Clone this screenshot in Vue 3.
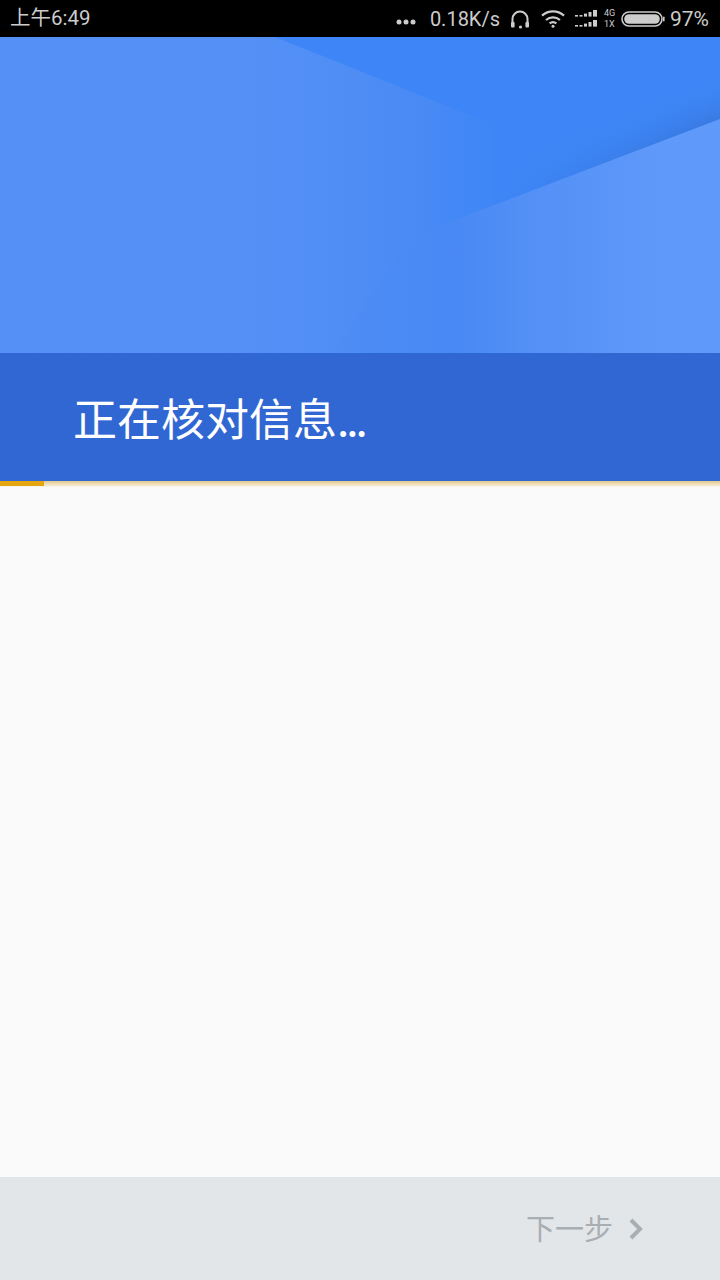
<script setup>
const title = '正在核对信息'
</script>

<template>
  <div class="screen">
    <header class="status">
      <span class="time">上午6:49</span>
      <div class="status-right">
        <svg class="dots" width="20" height="6" viewBox="0 0 20 6"><circle cx="3" cy="3" r="2.5" /><circle cx="10" cy="3" r="2.5" /><circle cx="17" cy="3" r="2.5" /></svg>
        <span class="speed">0.18K/s</span>
        <svg class="ic-head" width="20" height="20" viewBox="0 0 20 20" fill="none"><path d="M2.5 17V10a7.5 7.5 0 0 1 15 0v7" stroke="#ccc" stroke-width="2" /><rect x="1" y="13" width="3.6" height="5.5" rx="1" fill="#ccc" /><rect x="15.4" y="13" width="3.6" height="5.5" rx="1" fill="#ccc" /><circle cx="10.5" cy="18" r="1.6" fill="#ccc" /></svg>
        <svg class="ic-wifi" width="24" height="18" viewBox="0 0 24 18" fill="none" stroke="#ccc" stroke-width="2.2"><path d="M1 5.600C7.500 0 16.500 0 23 5.600" /><path d="M5 10c4.200-3.600 9.800-3.600 14 0" /><path d="M8.600 13.400c2-1.600 4.800-1.600 6.800 0" /><circle cx="12" cy="16.200" r="1.500" fill="#ccc" stroke="none" /></svg>
        <svg class="ic-sig" width="24" height="18" viewBox="0 0 24 18" fill="#ccc"><rect x="0" y="5" width="3" height="1.600" /><rect x="4.500" y="5" width="3" height="1.600" /><rect x="9" y="3.600" width="3" height="3" /><rect x="13.500" y="2" width="3" height="4.600" /><rect x="18" y="0" width="4" height="6.600" /><rect x="0" y="15" width="3" height="1.600" /><rect x="4.500" y="15" width="3" height="1.600" /><rect x="9" y="13.600" width="3" height="3" /><rect x="13.500" y="12" width="3" height="4.600" /><rect x="18" y="10" width="4" height="6.600" /></svg>
        <span class="net"><span>4G</span><span>1X</span></span>
        <svg class="ic-batt" width="44" height="16" viewBox="0 0 44 16" fill="none"><rect x="1" y="1" width="40" height="14" rx="7" stroke="#ccc" stroke-width="1.600" /><rect x="3.200" y="3.200" width="35.600" height="9.600" rx="4.800" fill="#ccc" /><rect x="42" y="5.500" width="1.600" height="5" rx=".8" fill="#ccc" /></svg>
        <span class="pct">97%</span>
      </div>
    </header>

    <section class="hero">
      <svg class="hero-art" width="720" height="316" viewBox="0 0 720 316" aria-hidden="true">
        <defs>
          <linearGradient id="base" gradientUnits="userSpaceOnUse" x1="0" y1="0" x2="720" y2="0">
            <stop offset="0" stop-color="#5490f6" />
            <stop offset=".33" stop-color="#5490f6" />
            <stop offset=".5" stop-color="#4f8df5" />
            <stop offset=".575" stop-color="#4a8af4" />
            <stop offset=".69" stop-color="#3e86f7" />
            <stop offset="1" stop-color="#3e86f7" />
          </linearGradient>
          <linearGradient id="right" gradientUnits="userSpaceOnUse" x1="330" y1="0" x2="660" y2="0">
            <stop offset="0" stop-color="#4a8af4" stop-opacity="0" />
            <stop offset=".27" stop-color="#4a8af4" />
            <stop offset=".36" stop-color="#4888f4" />
            <stop offset=".6" stop-color="#5390f6" />
            <stop offset="1" stop-color="#5f99f9" />
          </linearGradient>
          <linearGradient id="shade" gradientUnits="userSpaceOnUse" x1="600" y1="128" x2="585" y2="88">
            <stop offset="0" stop-color="#3876da" stop-opacity=".75" />
            <stop offset="1" stop-color="#3e86f7" stop-opacity="0" />
          </linearGradient>
          <linearGradient id="shadeFade" gradientUnits="userSpaceOnUse" x1="500" y1="0" x2="700" y2="0">
            <stop offset="0" stop-color="#000" />
            <stop offset="1" stop-color="#fff" />
          </linearGradient>
          <mask id="shadeMask" maskUnits="userSpaceOnUse" x="0" y="0" width="720" height="316">
            <rect width="720" height="316" fill="url(#shadeFade)" />
          </mask>
        </defs>
        <rect width="720" height="316" fill="url(#base)" />
        <polygon points="275,0 720,0 720,82 497,167 497,89" fill="#3e86f7" />
        <polygon points="720,20 720,82 497,167 497,100" fill="url(#shade)" mask="url(#shadeMask)" />
        <polygon points="720,82 413,199 330,316 720,316" fill="url(#right)" />
      </svg>
    </section>

    <section class="band">
      <svg class="grain" width="720" height="128" aria-hidden="true">
        <filter id="grainF"><feTurbulence type="fractalNoise" baseFrequency=".9" numOctaves="2" /><feColorMatrix type="saturate" values="0" /></filter>
        <rect width="720" height="128" filter="url(#grainF)" />
      </svg>
      <h1 class="title">{{ title }}<span class="ell">...</span></h1>
    </section>

    <div class="progress"><div class="progress-fill"></div></div>

    <main class="body"></main>

    <footer class="foot">
      <span class="next">下一步</span>
      <svg class="chev" width="16" height="24" viewBox="0 0 16 24" fill="none"><path d="M3 3l9 9-9 9" stroke="#a9aeb2" stroke-width="4" /></svg>
    </footer>
  </div>
</template>

<style scoped>
.screen {
  width: 720px;
  height: 1280px;
  display: flex;
  flex-direction: column;
  overflow: hidden;
  background: #fafafa;
  font-family: "Noto Sans CJK SC", "Noto Sans", sans-serif;
}
.status {
  height: 37px;
  flex: none;
  background: #000;
  color: #ccc;
  display: flex;
  align-items: center;
  justify-content: space-between;
  padding: 0 11px;
  font-family: Roboto, "Noto Sans CJK SC", sans-serif;
  font-size: 20px;
}
.time { font-size: 20.500px; line-height: 37px; margin-left: -1px; }
.status-right { display: flex; align-items: center; }
.dots { fill: #ccc; margin: 6px 14px 0 0; }
.speed { margin-right: 10px; }
.ic-head { margin-right: 11px; }
.ic-wifi { margin-right: 10px; }
.ic-sig { margin-right: 5px; }
.net {
  display: flex;
  flex-direction: column;
  font-size: 9px;
  line-height: 11px;
  width: 12px;
  margin-right: 5px;
}
.ic-batt { margin-right: 5px; }
.pct { font-size: 21px; }
.hero { height: 316px; flex: none; }
.hero-art { display: block; }
.band {
  position: relative;
  height: 128px;
  flex: none;
  background: #2f66d3;
  padding-left: 73px;
  display: flex;
  align-items: center;
}
.grain { position: absolute; inset: 0; opacity: .025; }
.title {
  position: relative;
  margin: 0;
  color: #fff;
  font-size: 44px;
  font-weight: 400;
  line-height: 1;
}
.ell { letter-spacing: -3px; }
.progress {
  height: 5px;
  flex: none;
  background: linear-gradient(#e2c88a, #f8efd8);
  box-shadow: 0 1px 0 #f8f3e6;
}
.progress-fill { width: 44px; height: 100%; background: #e5a50f; }
.body { flex: 1; }
.foot {
  height: 103px;
  flex: none;
  background: #e2e6e9;
  display: flex;
  align-items: center;
  justify-content: flex-end;
  padding-right: 76px;
  gap: 15px;
}
.next { color: #a9aeb2; font-size: 29px; line-height: 1; margin-top: -2px; }
</style>
